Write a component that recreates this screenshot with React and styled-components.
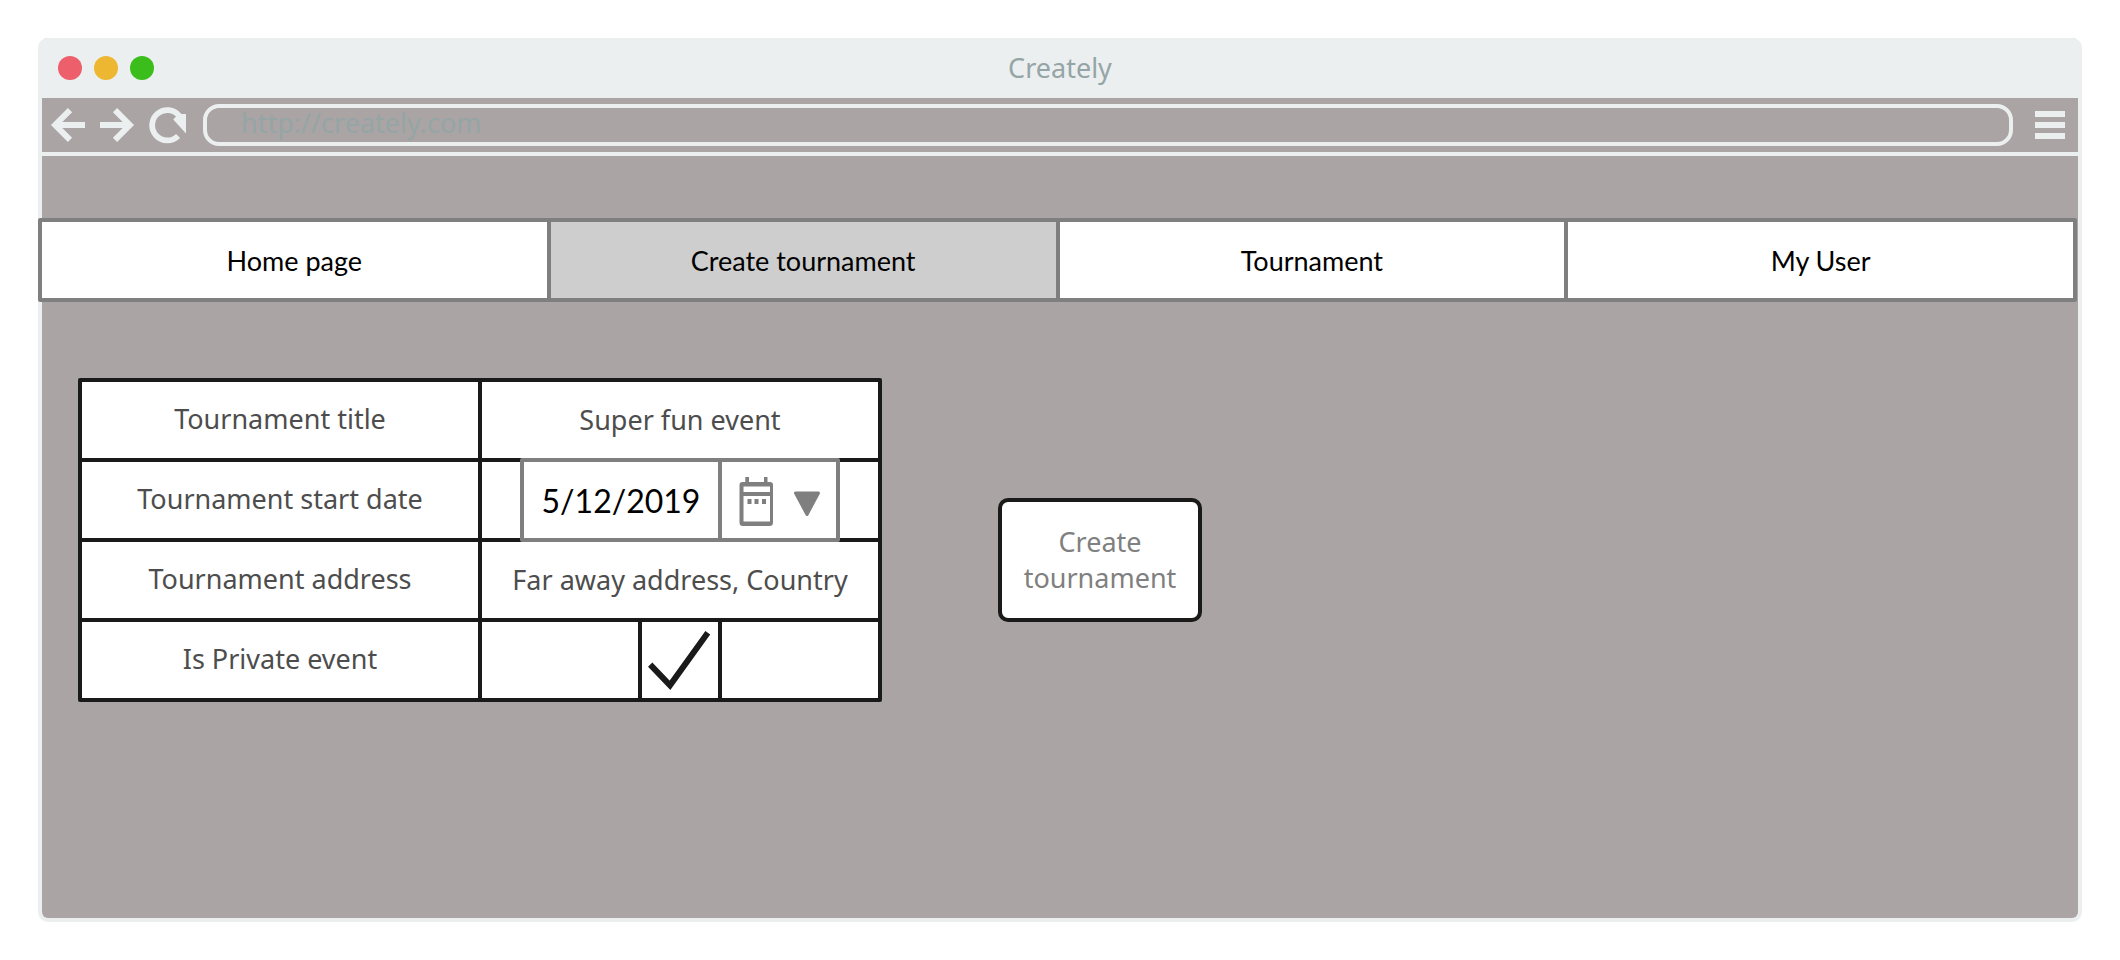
import React from "react";
import styled, { createGlobalStyle } from "styled-components";

const noto = '"Noto Sans", "Open Sans", sans-serif';
const lato = 'Lato, "Noto Sans", sans-serif';

const chrome = "#ebeff0";
const page = "#aaa4a4";
const grey = "#7f7f7f";
const ink = "#1a1a1a";

const GlobalStyle = createGlobalStyle`
  *, *::before, *::after { box-sizing: border-box; }
  body { margin: 0; background: #fff; font-family: ${noto}; font-size: 27px; }
  button, input { font: inherit; color: inherit; margin: 0; padding: 0; border: 0; background: none; border-radius: 0; }
  svg { display: block; }
`;

const Screen = styled.div`
  min-height: 100vh;
  padding: 38px;
  display: flex;
`;

const Window = styled.div`
  flex: 1;
  min-width: 0;
  display: flex;
  flex-direction: column;
  background: ${page};
  border: 4px solid ${chrome};
  border-top: 0;
  border-radius: 10px;
`;

const TitleBar = styled.header`
  display: grid;
  grid-template-columns: 1fr auto 1fr;
  align-items: center;
  height: 60px;
  margin: 0 -4px;
  padding: 0 20px;
  background: ${chrome};
  border-radius: 10px 10px 0 0;
`;

const Lights = styled.div`
  display: flex;
  gap: 12px;
`;

const Light = styled.button`
  width: 24px;
  height: 24px;
  border-radius: 50%;
  background: ${(p) => p.$color};
`;

const Title = styled.h1`
  margin: 0;
  font-size: 27px;
  font-weight: 400;
  line-height: 36px;
  color: #95a5a6;
`;

const Toolbar = styled.div`
  display: flex;
  align-items: center;
  height: 58px;
  padding: 0 11px 0 6px;
  gap: 9px;
  border-bottom: 4px solid ${chrome};
`;

const ToolButton = styled.button`
  flex: none;
  color: ${chrome};
`;

const Address = styled.input`
  flex: 1;
  min-width: 0;
  height: 42px;
  margin: 0 11px 0 6px;
  padding: 0 34px 6px;
  border: 4px solid ${chrome};
  border-radius: 16px;
  color: #95a5a6;
  outline: none;
`;

const Nav = styled.nav`
  display: flex;
  margin: 62px 1px 0 -4px;
  padding: 4px;
  gap: 4px;
  background: ${grey};
  border-radius: 2px;
`;

const NavLink = styled.a`
  flex: 1;
  height: 76px;
  display: flex;
  align-items: center;
  justify-content: center;
  background: ${(p) => (p.$active ? "#cecece" : "#fff")};
  color: #000;
  font-family: ${lato};
  font-size: 27px;
  text-decoration: none;
`;

const Form = styled.form`
  display: flex;
  flex-wrap: wrap;
  align-items: flex-start;
  gap: 40px 116px;
  padding: 76px 36px;
`;

const Fields = styled.div`
  width: 804px;
  max-width: 100%;
  display: grid;
  grid-template-columns: 1fr 1fr;
  grid-auto-rows: 76px;
  gap: 4px;
  padding: 4px;
  background: ${ink};
  border-radius: 2px;
  color: #4d4d4d;
`;

const Label = styled.label`
  display: flex;
  align-items: center;
  justify-content: center;
  padding-bottom: 2px;
  line-height: 36px;
  background: #fff;
`;

const Cell = styled.div`
  display: flex;
  align-items: center;
  justify-content: center;
  background: #fff;
`;

const TextInput = styled.input`
  width: 100%;
  height: 100%;
  padding-bottom: 2px;
  text-align: center;
  outline: none;
`;

const DateBox = styled.div`
  flex: none;
  display: flex;
  width: 320px;
  height: 84px;
  border: 4px solid ${grey};
  border-radius: 2px;
  background: #fff;
`;

const DateInput = styled.input`
  flex: 1;
  min-width: 0;
  text-align: center;
  font-family: ${lato};
  font-size: 32px;
  color: #000;
  outline: none;
`;

const DatePicker = styled.button`
  width: 118px;
  border-left: 4px solid ${grey};
  color: ${grey};
`;

const CheckBox = styled.div`
  display: grid;
  width: 84px;
  height: 76px;
  border: solid ${ink};
  border-width: 0 4px;

  > * { grid-area: 1 / 1; }
`;

const CheckInput = styled.input`
  appearance: none;
  width: 76px;
  height: 76px;

  & + svg { pointer-events: none; visibility: hidden; }
  &:checked + svg { visibility: visible; }
`;

const Submit = styled.button`
  width: 204px;
  height: 124px;
  margin-top: 120px;
  padding: 0 16px;
  border: 4px solid ${ink};
  border-radius: 10px;
  background: #fff;
  color: #808080;
  line-height: 36px;
`;

const BackIcon = () => (
  <svg width="40" height="38" fill="none" stroke="currentColor" strokeWidth="6">
    <path d="M22 4.2 7.2 19 22 33.8M7.2 19H37" />
  </svg>
);

const ForwardIcon = () => (
  <svg width="40" height="38" fill="none" stroke="currentColor" strokeWidth="6">
    <path d="M18 4.2 32.8 19 18 33.8M32.8 19H3" />
  </svg>
);

const ReloadIcon = () => (
  <svg width="42" height="38" fill="none" stroke="currentColor" strokeWidth="5.8">
    <path d="M32.1 30A15.2 15.2 0 1 1 33.4 10" />
    <path d="M40 8V27.500L27.200 13.500 30 10.500 30 8Z" fill="currentColor" stroke="none" />
  </svg>
);

const MenuIcon = () => (
  <svg width="34" height="38" fill="currentColor">
    <path d="M2 5H32V11H2ZM2 16H32V22H2ZM2 27H32V33H2Z" />
  </svg>
);

const CalendarIcon = () => (
  <svg width="114" height="76" fill="currentColor">
    <path
      fillRule="evenodd"
      d="M20.5 20H48Q51 20 51 23V60.5Q51 64 47.500 64H21Q17.500 64 17.500 60.5V23Q17.500 20 20.500 20ZM21.500 24.500V30H48V24.500ZM21.500 34V59.500H48V34Z"
    />
    <path d="M23.300 15H27V21H23.300ZM42 15H45.500V21H42ZM25.500 37H29.500V42H25.500ZM32.500 37H36.500V42H32.500ZM40 37H44V42H40Z" />
    <path
      d="M73.500 31H96.500L85 52.500Z"
      stroke="currentColor"
      strokeWidth="3"
      strokeLinejoin="round"
    />
  </svg>
);

const CheckIcon = () => (
  <svg width="76" height="76" fill="none" stroke={ink} strokeWidth="6">
    <path d="M8.200 42.700 28 63.300 65.800 10.700" />
  </svg>
);

const lights = [
  ["Close", "#ec5f6b"],
  ["Minimize", "#edb732"],
  ["Maximize", "#3bbd1c"],
];

const links = ["Home page", "Create tournament", "Tournament", "My User"];

export default function App() {
  return (
    <Screen>
      <GlobalStyle />
      <Window>
        <TitleBar>
          <Lights>
            {lights.map(([name, color]) => (
              <Light key={name} type="button" aria-label={name} $color={color} />
            ))}
          </Lights>
          <Title>Creately</Title>
        </TitleBar>
        <Toolbar>
          <ToolButton type="button" aria-label="Back"><BackIcon /></ToolButton>
          <ToolButton type="button" aria-label="Forward"><ForwardIcon /></ToolButton>
          <ToolButton type="button" aria-label="Reload"><ReloadIcon /></ToolButton>
          <Address type="text" aria-label="Address" defaultValue="http://creately.com" />
          <ToolButton type="button" aria-label="Menu"><MenuIcon /></ToolButton>
        </Toolbar>
        <Nav>
          {links.map((name) => (
            <NavLink key={name} href="#" $active={name === "Create tournament"}>
              {name}
            </NavLink>
          ))}
        </Nav>
        <Form onSubmit={(e) => e.preventDefault()}>
          <Fields>
            <Label htmlFor="title">Tournament title</Label>
            <Cell>
              <TextInput id="title" type="text" defaultValue="Super fun event" />
            </Cell>
            <Label htmlFor="date">Tournament start date</Label>
            <Cell>
              <DateBox>
                <DateInput id="date" type="text" defaultValue="5/12/2019" />
                <DatePicker type="button" aria-label="Pick a date">
                  <CalendarIcon />
                </DatePicker>
              </DateBox>
            </Cell>
            <Label htmlFor="address">Tournament address</Label>
            <Cell>
              <TextInput id="address" type="text" defaultValue="Far away address, Country" />
            </Cell>
            <Label htmlFor="private">Is Private event</Label>
            <Cell>
              <CheckBox>
                <CheckInput id="private" type="checkbox" defaultChecked />
                <CheckIcon />
              </CheckBox>
            </Cell>
          </Fields>
          <Submit type="submit">Create tournament</Submit>
        </Form>
      </Window>
    </Screen>
  );
}
